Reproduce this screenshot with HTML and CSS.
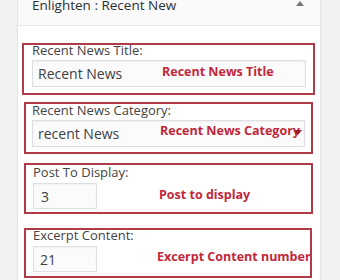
FILE: index.html
```html
<!DOCTYPE html>
<html lang="en">

<head>
    <meta charset="UTF-8">
    <meta name="viewport" content="width=device-width, initial-scale=1.0">
    <title>Enlighten : Recent New</title>
    <link rel="stylesheet" href="styles.css">
</head>

<body>
    <div class="widget">
        <div class="widget-top">
            <h3 class="widget-title">Enlighten : Recent New</h3>
            <span class="toggle"></span>
        </div>
        <div class="widget-inside">
            <div class="field field-title">
                <label>Recent News Title:</label>
                <input class="wide" type="text" value="Recent News">
                <span class="note note-title">Recent News Title</span>
            </div>
            <div class="field field-cat">
                <label>Recent News Category:</label>
                <div class="select-wrap">
                    <select class="wide">
                        <option>recent News</option>
                    </select>
                </div>
                <span class="note note-cat">Recent News Category</span>
                <span class="select-arrow"></span>
            </div>
            <div class="field field-count">
                <label>Post To Display:</label>
                <input class="small" type="text" value="3">
                <span class="note note-count">Post to display</span>
            </div>
            <div class="field field-excerpt">
                <label>Excerpt Content:</label>
                <input class="small" type="text" value="21">
                <span class="note note-excerpt">Excerpt Content number</span>
            </div>
        </div>
    </div>
</body>

</html>
```

FILE: styles.css
```css
* {
    margin: 0;
    padding: 0;
    box-sizing: border-box;
    font-family: 'Open Sans', sans-serif;
}

body {
    background: #f1f1f1;
    height: 280px;
    overflow: hidden;
}

.widget {
    margin-left: 17px;
    width: 304px;
    height: 280px;
    background: #fff;
    border-left: 1px solid #e5e5e5;
    border-right: 1px solid #e5e5e5;
    box-shadow: 0 1px 1px rgba(0, 0, 0, 0.04);
}

.widget-top {
    display: flex;
    justify-content: space-between;
    align-items: flex-start;
    height: 26px;
    padding: 0 16px 0 14px;
    background: #fafafa;
    border-bottom: 1px solid #e5e5e5;
}

.widget-title {
    margin-top: -4px;
    font-size: 13.5px;
    font-weight: 500;
    color: #2b3035;
    line-height: normal;
}

.toggle {
    margin-top: 1px;
    width: 0;
    height: 0;
    border-left: 4px solid transparent;
    border-right: 4px solid transparent;
    border-bottom: 5px solid #72777c;
}

/* red outlined fields */
.field {
    position: relative;
    border: 2px solid #b13a48;
    padding-left: 6px;
    width: 289px;
    margin-left: 6px;
}

.field-title {
    margin-top: 17px;
    margin-left: 4px;
    width: 293px;
    padding: 0 0 6px 8px;
}

.field-cat {
    margin-top: 7px;
    padding: 1px 0 5px 6px;
}

.field-count {
    margin-top: 9px;
    padding: 2px 0 3px 7px;
}

.field-excerpt {
    margin-top: 14px;
    width: 288px;
    padding: 0 0 4px 7px;
}

label {
    display: block;
    font-size: 13px;
    line-height: 10px;
    color: #444;
    margin-bottom: 5px;
}

.field-count label,
.field-excerpt label {
    margin-bottom: 6px;
}

input,
select {
    display: block;
    height: 27px;
    font-size: 14px;
    color: #3c4146;
    background: #fbfbfb;
    border: 1px solid #dcdfe3;
    box-shadow: inset 0 1px 2px rgba(0, 0, 0, 0.05);
    padding: 0 5px;
    outline: none;
}

input.wide {
    width: 274px;
}

select.wide {
    width: 273px;
    appearance: none;
    -webkit-appearance: none;
    border-radius: 0;
}

input.small {
    width: 64px;
    height: 26px;
    padding-left: 7px;
}

.field-excerpt input.small {
    padding-left: 6px;
}

.note {
    position: absolute;
    font-size: 12.5px;
    font-weight: 700;
    line-height: 18px;
    color: #c1283a;
    white-space: nowrap;
}

.note-title {
    top: 18px;
    left: 138px;
}

.note-cat {
    top: 18px;
    left: 134px;
}

.note-count {
    top: 21px;
    left: 133px;
}

.note-excerpt {
    top: 18px;
    left: 131px;
}

.select-arrow {
    position: absolute;
    top: 26px;
    left: 268px;
    width: 0;
    height: 0;
    border-left: 4px solid transparent;
    border-right: 4px solid transparent;
    border-top: 5px solid #9a1e2e;
}
```
